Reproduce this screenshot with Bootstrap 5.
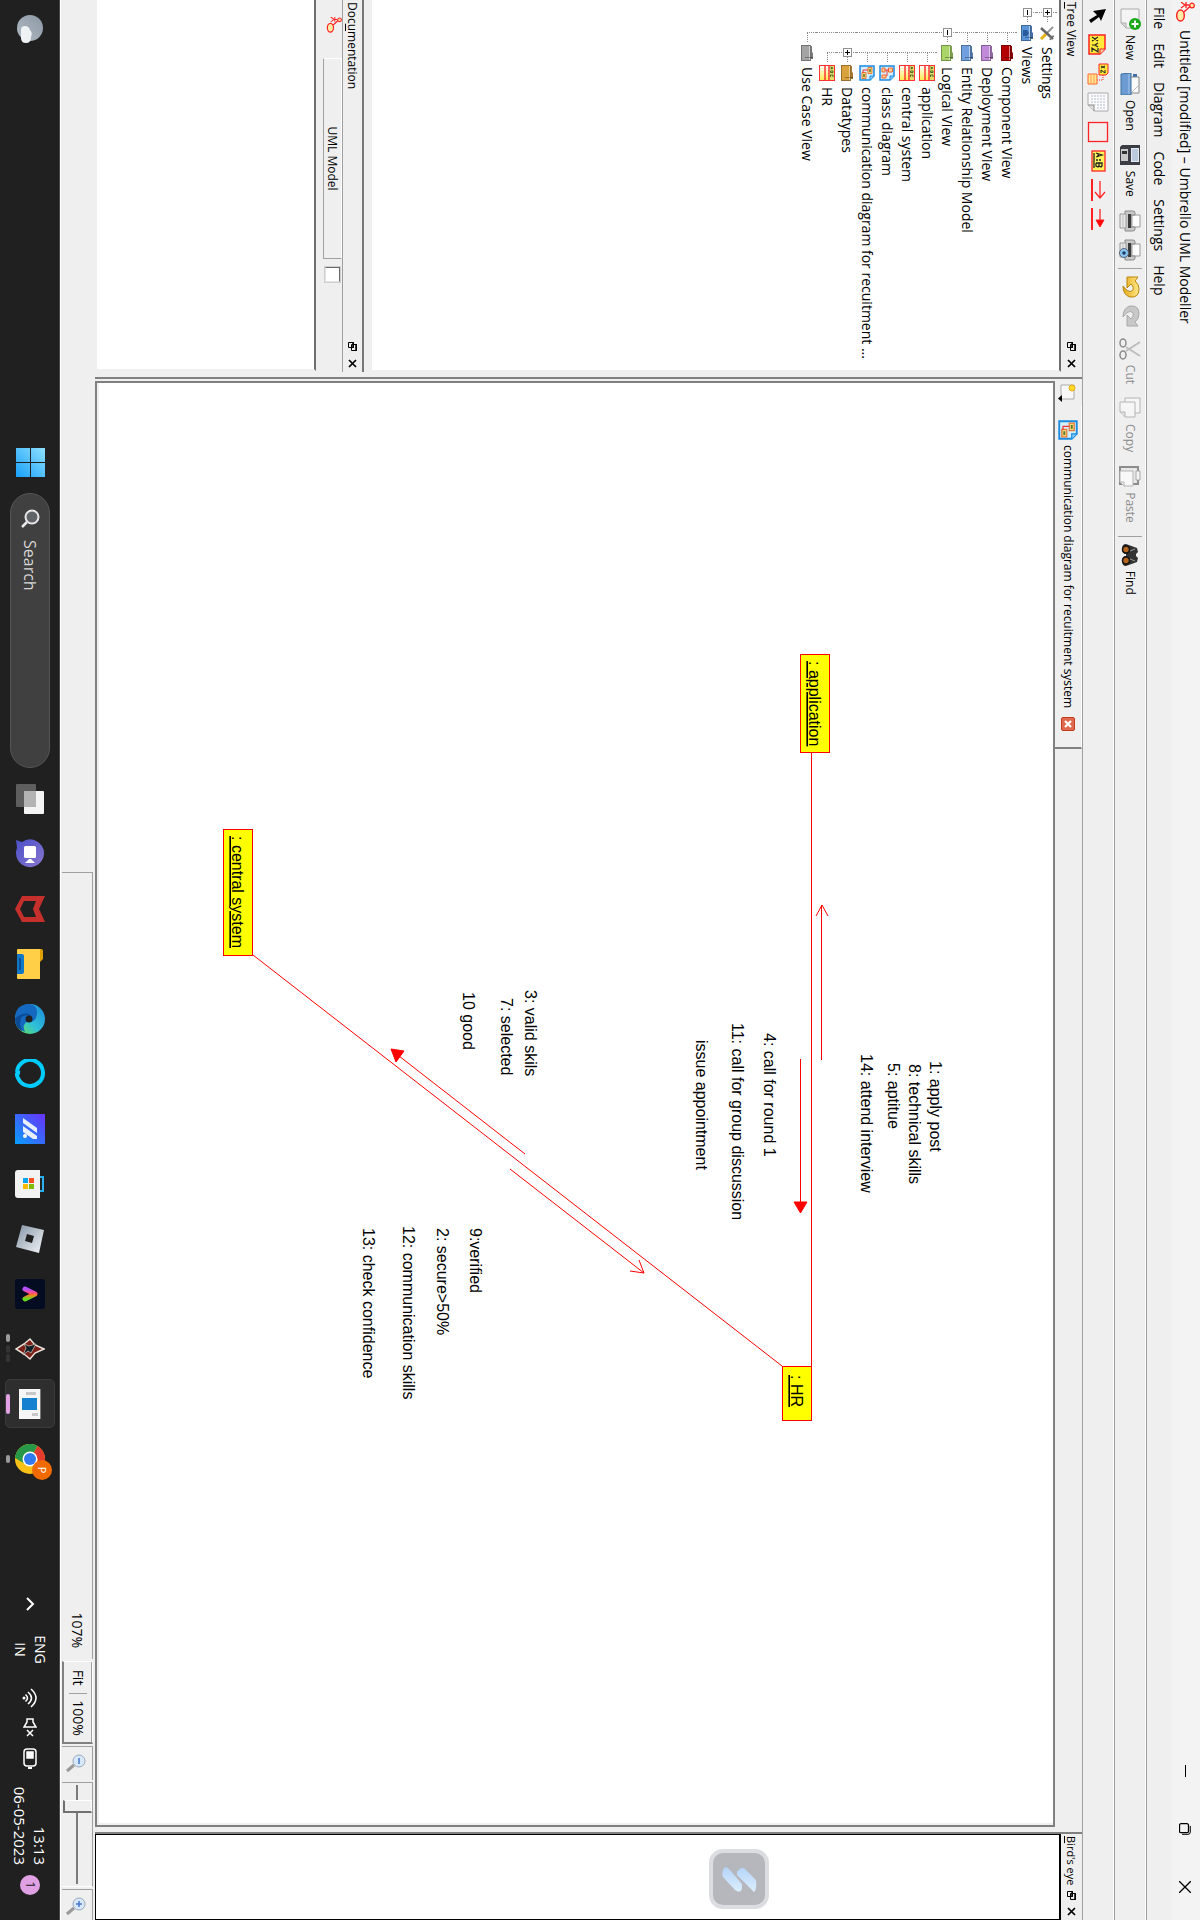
<!DOCTYPE html>
<html lang="en">
<head>
<meta charset="utf-8">
<meta name="viewport" content="width=device-width, initial-scale=1">
<title>Untitled [modified] – Umbrello UML Modeller</title>
<link href="https://cdn.jsdelivr.net/npm/bootstrap@5.3.0/dist/css/bootstrap.min.css" rel="stylesheet">
<style>
  html, body { height: 100%; overflow: hidden; background: #efefef; }
  .display { width: 100%; height: 100%; overflow: hidden; contain: strict; }
  /* The desktop is turned a quarter clockwise on a portrait display */
  .desktop {
    width: 100vh; height: 100vw; overflow: hidden;
    transform-origin: 0 0; transform: translateX(100vw) rotate(90deg);
    font: 14px/20px "Open Sans", "Noto Sans", sans-serif; color: #000; background: #efefef;
  }
  .desktop svg { display: block; flex: none; }
  .desktop .btn { border: 0; border-radius: 0; padding: 0; font-size: inherit; line-height: inherit; color: inherit; }
  .titlebar { height: 29px; background: #f3f3f3; padding-left: 2px; font-size: 14px; }
  .winctl { width: 58px; height: 29px; display: flex; align-items: center; justify-content: center; }
  .menubar { height: 25px; padding-left: 7px; gap: 14px; border-bottom: 1px solid #a0a0a0; font-size: 14px; }
  .menubar a { color: #000; text-decoration: none; }
  .toolrow { height: 32px; border-top: 1px solid #fff; border-bottom: 1px solid #a0a0a0; padding-left: 8px; gap: 7px; }
  .toolrow.toolmain { font-size: 12px; }
  .toolmain .btn { gap: 5px; display: flex; align-items: center; }
  .toolmain .btn.labelled { margin-right: 6px; }
  .toolmain .btn:disabled { opacity: 1; color: #8b8b8b; }
  .toolsep { width: 1px; height: 24px; background: #a0a0a0; }
  .docktitle { height: 21px; padding: 0 4px 0 2px; font-size: 12px; line-height: 20px; }
  .docktitle u { text-underline-offset: 2px; }
  .dockbtns { display: flex; gap: 8px; }
  .leftdock { width: 372px; flex: none; }
  .sunken { background: #fff; border: 2px solid; border-color: #888 #efefef #efefef #888; }
  .treebox { flex: 691 1 0; border-left-width: 0; border-top: 2px solid #6d6d6d; }
  .tree { list-style: none; margin: 0; padding: 2px 0 0 3px; }
  .tree li { height: 20px; display: flex; align-items: center; white-space: nowrap; }
  .tree li > svg { margin: 0 6px 0 2px; }
  .guide { width: 20px; height: 20px; flex: none; position: relative; }
  .guide.g-v::before, .guide.g-t::before, .guide.g-l::before { content: ""; position: absolute; left: 9px; top: 0; height: 20px; border-left: 1px dotted #8a8a8a; }
  .guide.g-l::before { height: 10px; }
  .guide.g-t::after, .guide.g-l::after { content: ""; position: absolute; left: 10px; top: 9px; width: 9px; border-top: 1px dotted #8a8a8a; }
  .guide .fold { position: absolute; z-index: 1; left: 5px; top: 5px; width: 9px; height: 9px; background: #fff; border: 1px solid #919191; padding: 0; }
  .fold::before { content: ""; position: absolute; left: 1px; top: 3px; width: 5px; height: 1px; background: #000; }
  .fold.plus::after { content: ""; position: absolute; left: 3px; top: 1px; width: 1px; height: 5px; background: #000; }
  .docdock { flex: 268 1 0; min-height: 0; margin-top: 6px; border-top: 2px solid #777; }
  .docdock .docktitle { height: 19px; }
  .dochead { height: 27px; border-top: 1px solid #a0a0a0; padding-left: 17px; font-size: 12px; }
  .dochead .btn { width: 201px; height: 19px; margin: 0 8px 0 25px; line-height: 17px; border: 1px solid; border-color: #fff #a0a0a0 #a0a0a0 #fff; }
  .dochead input { appearance: none; width: 15px; height: 15px; margin: 2px 0 0; background: #fff; border: 1px solid; border-color: #696969 #e3e3e3 #e3e3e3 #696969; box-shadow: 0 0 0 1px #cfcfcf; border-radius: 0; }
  .docdock textarea { resize: none; border-radius: 0; width: 371px; border-left: 0; border-top-color: #6d6d6d; display: block; }
  .workarea { margin-left: 5px; border-left: 2px solid #808080; padding-left: 2px; min-width: 0; }
  .tabstrip { height: 27px; padding-left: 2px; }
  .tabmenu { width: 23px; border-right: 1px solid #fff; }
  .doctab { display: flex; align-items: center; width: 343px; padding-left: 14px; gap: 5px; border-top: 1px solid #fff; border-right: 2px solid #808080; font-size: 12px; }
  .tabclose { width: 14px; height: 14px; border: 1px solid #c93a22 !important; border-radius: 2px !important; background: #dd6a50; }
  .canvasbox { border: 2px solid #808080; background: #fff; overflow: hidden; min-height: 0; box-shadow: inset -2px -2px 0 #efefef; }
  .diagram { width: 100%; height: 100%; font: 16px "Liberation Sans", Arial, sans-serif; }
  .rightdock { width: 88px; flex: none; margin-left: 5px; border-left: 2px solid #808080; }
  .rightdock .docktitle { font-size: 11px; }
  .rightdock .dockbtns { gap: 7px; }
  .birdseye { background: #fff; border: 1px solid #000; border-top-width: 2px; }
  .applogo { width: 60px; height: 60px; margin: 290px 0 0 14px; background: #b6b7bc; border: 4px solid #dcdde1; border-radius: 14px; }
  .statusbar { height: 35px; padding: 2px 0 1px; gap: 2px; border-bottom: 1px solid #fff; }
  .statpad { flex: 876 1 0; }
  .statmsg { flex: 781 1 0; padding-right: 11px; border-top: 1px solid #a0a0a0; border-left: 1px solid #a0a0a0; }
  .zoomset { width: 83px; border: 1px solid #fff; border-right: 2px solid #808080; border-bottom: 2px solid #808080; box-shadow: inset 0 1px 0 #a0a0a0; }
  .zoomset .btn { width: 31px; height: 18px; line-height: 18px; }
  .zoomset .btn + .btn { width: 49px; border-left: 1px solid #a0a0a0; }
  .statcell { border-top: 1px solid #a0a0a0; border-left: 1px solid #a0a0a0; border-right: 1px solid #fff; }
  .statcell.btn { border-top: 1px solid #a0a0a0 !important; border-left: 1px solid #a0a0a0 !important; }
  .zoomslide { appearance: none; width: 99px; height: 29px; margin: 0 2px; background: linear-gradient(#7b7b7b, #7b7b7b) 0 14px / 100% 2px no-repeat; display: block; }
  .zoomslide::-webkit-slider-thumb { appearance: none; width: 13px; height: 29px; background: #efefef; border: 1px solid #fff; border-right: 2px solid #707070; border-bottom: 2px solid #707070; }
  .taskbar { height: 60px; background: #202020; border-top: 1px solid #4a4a4a; padding-bottom: 1px; color: #fff; }
  .taskbar .btn { width: 55px; height: 58px; display: flex; align-items: center; justify-content: center; position: relative; flex: none; }
  .weather { width: 448px; padding-left: 14px; }
  .searchpill { width: 275px; height: 40px; margin: 0 3px 0 15px; padding-left: 15px; gap: 11px; background: #404040; border: 1px solid #555; border-radius: 20px; }
  .searchpill input { background: none; border: 0; outline: 0; width: 200px; font-size: 16px; color: #fff; padding: 0; }
  .searchpill input::placeholder { color: #d8d8d8; opacity: 1; }
  .runmark { position: absolute; bottom: 5px; left: 24px; width: 8px; height: 4px; border-radius: 2px; background: #9a9a9a; }
  .runmark.stack { left: 13px; box-shadow: 11px 0 0 #343434, 20px 0 0 #343434; }
  .runmark.front { left: 18px; width: 20px; background: #dfa0e4; }
  .taskbar .btn.current::before { content: ""; position: absolute; inset: 4px 3px; background: #2e2e2e; border: 1px solid #3b3b3b; border-radius: 5px; }
  .current svg, .current .runmark { z-index: 1; }
  .profile { position: absolute; top: 7px; left: 29px; width: 20px; height: 20px; border-radius: 50%; background: #f06a00; font-size: 11px; line-height: 20px; text-align: center; }
  .tray { gap: 18px; padding-right: 25px; }
  .trayicons { gap: 10px; }
  .lang { font-size: 14px; line-height: 20px; margin: 0 6px; }
  .clock { font-size: 15px; line-height: 20px; }
  .notecount { width: 20px; height: 20px; border-radius: 50%; background: #dfa0e4; color: #222; font-size: 12px; line-height: 20px; text-align: center; }
</style>
</head>
<body>
<svg width="0" height="0" class="position-absolute" aria-hidden="true">
  <defs>
    <linearGradient id="gold" x1="0" y1="0" x2="0" y2="1"><stop offset="0" stop-color="#ffe98a"/><stop offset="1" stop-color="#e4a818"/></linearGradient>
    <linearGradient id="cls" x1="0" y1="0" x2="1" y2="0"><stop offset="0" stop-color="#fff"/><stop offset="1" stop-color="#ffe94a"/></linearGradient>
    <linearGradient id="win" x1="0" y1="0" x2="1" y2="1"><stop offset="0" stop-color="#8fe0ff"/><stop offset="1" stop-color="#18a0f8"/></linearGradient>
    <linearGradient id="chat" x1="0" y1="1" x2="1" y2="0"><stop offset="0" stop-color="#4a50c8"/><stop offset="1" stop-color="#8a78d0"/></linearGradient>
    <linearGradient id="strm" x1="0" y1="0" x2="1" y2="1"><stop offset="0" stop-color="#08a0ff"/><stop offset="0" stop-color="#6a30f8"/><stop offset="1" stop-color="#08a0ff"/></linearGradient>
    <linearGradient id="rbx" x1="0" y1="1" x2="1" y2="0"><stop offset="0" stop-color="#8494a4"/><stop offset="1" stop-color="#f4f6f8"/></linearGradient>
    <linearGradient id="rain" x1="0" y1="0" x2="1" y2="0"><stop offset="0" stop-color="#b050ff"/><stop offset=".35" stop-color="#ff4a90"/><stop offset=".6" stop-color="#ff7a20"/><stop offset="1" stop-color="#60e020"/></linearGradient>
    <linearGradient id="edgeg" x1="0" y1="0" x2="1" y2="1"><stop offset="0" stop-color="#1a88d8"/><stop offset=".55" stop-color="#30c0d8"/><stop offset="1" stop-color="#70e840"/></linearGradient>
    <linearGradient id="moon" x1="0" y1="0" x2="1" y2="1"><stop offset="0" stop-color="#8c98a4"/><stop offset="1" stop-color="#b0bac4"/></linearGradient>
    <linearGradient id="strip" x1="0" y1="0" x2="1" y2="0"><stop offset="0" stop-color="#b4d4f8"/><stop offset="1" stop-color="#dceefe"/></linearGradient>
  </defs>
  <symbol id="i-folder" viewBox="0 0 16 16"><path d="M1 3h6l1-1h6v3H1z" fill="currentColor"/><path d="M1 3h6l1-1h6v3H1z" fill="#000" opacity=".25"/><path d="M0 4h16v10H0z" fill="currentColor"/><path d="M1 5.500h14" stroke="#fff" opacity=".5"/><path d="M.5 4.500h15v9H.5zM12.500 2v8" fill="none" stroke="#000" opacity=".3"/></symbol>
  <symbol id="i-class" viewBox="0 0 16 16"><rect x=".5" y=".5" width="15" height="15" fill="url(#cls)" stroke="#f33"/><rect x="1" y="1" width="14" height="4" fill="#e4dc6a"/><path d="M2 4.500 3 2l1 2.500M6 4.500V2h1.500v2.500zM12 2h-2v2.500h2" stroke="#4a6a28" fill="none"/><path d="M1 6h14M1 10h14" stroke="#f33" stroke-width="1.500"/></symbol>
  <symbol id="i-comm" viewBox="0 0 16 16"><path d="M1 1h10l4 4v10H1z" fill="#d4f0ff" stroke="#1a8ae0" stroke-width="1.500"/><path d="M11 1v4h4" fill="#8fd0fa" stroke="#1a8ae0"/><path d="M2.500 3h6v4h-6zM7.500 9h6v4h-6z" fill="#f3d87a" stroke="#e8783a"/><path d="M5 7v5h3" fill="none" stroke="#e33"/><path d="M4 5h3M9 11h3" stroke="#5a7a2a" stroke-width="1.500"/></symbol>
  <symbol id="i-clsdiag" viewBox="0 0 16 16"><path d="M1 1h10l4 4v10H1z" fill="#d4f0ff" stroke="#1a8ae0" stroke-width="1.500"/><path d="M11 1v4h4" fill="#8fd0fa" stroke="#1a8ae0"/><path d="M3 2.500h4v4H3zM10 9h3v4h-3zM3 10h4v3H3z" fill="#ffd0a0" stroke="#f0642a"/><path d="M5 6v4M5 8h6" fill="none" stroke="#e33"/></symbol>
  <symbol id="i-umb" viewBox="0 0 20 20"><path d="M4 4.500 10 11" stroke="#f22" stroke-width="1.500"/><circle cx="3.500" cy="3" r="2.300" fill="#ffe9a0" stroke="#f22" stroke-width="1.300"/><path d="M0 9h6M3 6v5M3 10l-3 4M3 10l3 4" stroke="#f22" stroke-width="1.300" fill="none"/><ellipse cx="13.500" cy="14.500" rx="5.500" ry="3.800" fill="#ffeca8" stroke="#f22" stroke-width="1.500"/></symbol>
  <symbol id="i-float" viewBox="0 0 9 9"><path d="M2.500.5h6v5h-6zM.5 3.500h5v5h-5z" fill="#efefef" stroke="#000"/><path d="M2 1h7M0 4h6" stroke="#000" stroke-width="1.500"/></symbol>
  <symbol id="i-x" viewBox="0 0 9 9"><path d="M1 1l7 7M8 1 1 8" stroke="#000" stroke-width="1.700"/></symbol>
  <symbol id="i-print" viewBox="0 0 22 22"><path d="M5 1h12v8H5z" fill="#fdfdfd" stroke="#999"/><path d="M1 8q0-2 2-2h2v4h12V6h2q2 0 2 2v8H1z" fill="#c9c9c9" stroke="#8a8a8a"/><path d="M4 10h14v3H4z" fill="#3a3a3a"/><path d="M4 15h14v6H4z" fill="#e9e9e9" stroke="#999"/><path d="M5 18h12" stroke="#bbb"/></symbol>
</svg>

<div class="display">
<div class="desktop d-flex flex-column">
  <header class="titlebar d-flex align-items-center">
    <svg width="20" height="20"><use href="#i-umb"/></svg>
    <span class="ms-2 me-auto">Untitled [modified] – Umbrello UML Modeller</span>
    <button class="btn winctl" aria-label="Minimize"><svg width="12" height="12"><path d="M0 5.500h12" stroke="#000"/></svg></button>
    <button class="btn winctl" aria-label="Restore"><svg width="12" height="12" fill="none" stroke="#000"><rect x=".7" y="2.500" width="9" height="9" rx="1.500" stroke-width="1.300"/><path d="M3 .7h6q2.300 0 2.300 2.300v6"/></svg></button>
    <button class="btn winctl me-1" aria-label="Close"><svg width="12" height="12"><path d="M0 0l12 12M12 0 0 12" stroke="#000" stroke-width="1.300"/></svg></button>
  </header>

  <nav class="menubar d-flex align-items-center" aria-label="Menu">
    <a href="#">File</a><a href="#">Edit</a><a href="#">Diagram</a><a href="#">Code</a><a href="#">Settings</a><a href="#">Help</a>
  </nav>

  <div class="toolrow toolmain d-flex align-items-center" role="toolbar" aria-label="Main toolbar">
    <button class="btn labelled"><svg width="22" height="22"><path d="M1 2h19v13l-5 5H1z" fill="#f4f4f4" stroke="#aaa"/><path d="M20 15h-5v5z" fill="#ddd" stroke="#aaa"/><circle cx="16" cy="6" r="6" fill="#18a818"/><path d="M16 2.500v7M12.500 6h7" stroke="#fff" stroke-width="2"/></svg>New</button>
    <button class="btn labelled"><svg width="22" height="22"><path d="M1 4h8v4H1z" fill="#3c6ca8"/><path d="M4 2h16v12H4z" fill="#fafafa" stroke="#888"/><path d="M12 2l8 8" stroke="#bbb"/><path d="M0 10h22v10H1z" fill="#6b9bd2" stroke="#41709f"/><path d="M1 12h20" stroke="#a9c8ea"/></svg>Open</button>
    <button class="btn labelled"><svg width="22" height="22"><path d="M1 1h20v20H3l-2-2z" fill="#3c3c44"/><path d="M4 2h14v8H4z" fill="#e6ecf4"/><path d="M5 4h12M5 6h12M5 8h12" stroke="#8fa6c4"/><path d="M5 13h12v7H5z" fill="#c9c9c9"/><path d="M7 14h3v5H7z" fill="#333"/></svg>Save</button>
    <button class="btn" aria-label="Print"><svg width="22" height="22"><use href="#i-print"/></svg></button>
    <button class="btn" aria-label="Print preview"><svg width="22" height="22"><use href="#i-print"/><circle cx="14" cy="17" r="4.500" fill="#8cc4f0" stroke="#567"/><circle cx="14" cy="17" r="1.800" fill="#1a3a6a"/></svg></button>
    <span class="toolsep"></span>
    <button class="btn" aria-label="Undo"><svg width="22" height="22"><path d="M1 3v11h11l-4-4q4-4 7-1 2 4-5 9 9 0 11-7 1-9-8-9-5 0-8 4z" fill="url(#gold)" stroke="#b8860b"/></svg></button>
    <button class="btn me-1" disabled aria-label="Redo"><svg width="22" height="22"><path d="M21 3v11H10l4-4q-4-4-7-1-2 4 5 9-9 0-11-7-1-9 8-9 5 0 8 4z" fill="#c8c8c8" stroke="#a8a8a8"/></svg></button>
    <button class="btn labelled" disabled><svg width="22" height="22"><path d="M4 1l9 14M18 1 9 15" stroke="#bdbdbd" stroke-width="2"/><ellipse cx="5" cy="18" rx="4" ry="3" fill="none" stroke="#8c8c8c" stroke-width="1.500"/><ellipse cx="17" cy="18" rx="4" ry="3" fill="none" stroke="#8c8c8c" stroke-width="1.500"/></svg>Cut</button>
    <button class="btn labelled" disabled><svg width="22" height="22"><path d="M1 1h15v15H1z" fill="#f6f6f6" stroke="#b4b4b4"/><path d="M5 6h15v10l-5 5H5z" fill="#f6f6f6" stroke="#b4b4b4"/><path d="M20 16h-5v5" fill="#e2e2e2" stroke="#b4b4b4"/></svg>Copy</button>
    <button class="btn labelled" disabled><svg width="22" height="22"><path d="M2 3h17v18H2z" fill="#e8e8e8" stroke="#8c8c8c" stroke-width="2"/><path d="M6 1h9v4H6z" fill="#f4f4f4" stroke="#a8a8a8"/><path d="M6 8h15v9l-4 4H6z" fill="#f8f8f8" stroke="#b4b4b4"/><path d="M21 17h-4v4" fill="none" stroke="#b4b4b4"/></svg>Paste</button>
    <span class="toolsep"></span>
    <button class="btn"><svg width="22" height="22"><path d="M4 4l4-1 2 2h2l2-2 4 1 4 11q0 4-5 4t-5-4h-2q0 4-5 4t-5-4z" fill="#333"/><circle cx="5.500" cy="15" r="3.500" fill="#b5651d" stroke="#111" stroke-width="1.500"/><circle cx="16.500" cy="15" r="3.500" fill="#b5651d" stroke="#111" stroke-width="1.500"/><path d="M5 6l2 5M17 6l-2 5" stroke="#999"/></svg>Find</button>
  </div>

  <div class="toolrow d-flex align-items-center" role="toolbar" aria-label="Diagram toolbar">
    <button class="btn" aria-label="Select"><svg width="19" height="22"><path d="M1 3l12 5-4 2 6 8-3 2-5-8-4 4z"/></svg></button>
    <button class="btn" aria-label="Note"><svg width="22" height="22"><path d="M1 4h14l5 5v11H1z" fill="#ffe93c" stroke="#f22" stroke-width="1.500"/><path d="M15 4v5h5" fill="#ffd0a0" stroke="#f22"/><path d="M3 11l4 6M7 11l-4 6M9 11l2 3 2-3M11 14v3M14 11h4l-4 6h4" fill="none" stroke="#222" stroke-width="1.200"/></svg></button>
    <button class="btn" aria-label="Anchor"><svg width="22" height="22"><path d="M1 1h9l2 2v7H1z" fill="#ffe93c" stroke="#f22"/><path d="M3 4l2 4M5 4 3 8M7 4h3L7 8h3" stroke="#222" fill="none"/><path d="M12 6h5v6" fill="none" stroke="#f22" stroke-dasharray="1 1"/><path d="M11 12h10v9H11z" fill="#ffe98a" stroke="#f63"/><path d="M11 15h10M11 18h10" stroke="#f96"/></svg></button>
    <button class="btn" aria-label="Text line"><svg width="22" height="22"><path d="M1 1h18v14l-6 6H1z" fill="#fbfbfd" stroke="#aaa"/><path d="M3 5h14M3 8h14M3 11h14M3 14h10M3 17h8" stroke="#b4bccc" stroke-dasharray="2 1"/><path d="M19 15h-6v6" fill="#ddd" stroke="#888"/></svg></button>
    <button class="btn" aria-label="Box"><svg width="22" height="22"><rect x="1.500" y="1.500" width="19" height="19" fill="#f2efef" stroke="#f22" stroke-width="1.300"/></svg></button>
    <button class="btn" aria-label="Object"><svg width="22" height="22"><rect x="1" y="4" width="20" height="13" fill="#fff35a" stroke="#f22" stroke-width="1.300"/><path d="M3 13l2-6 2 6M4 11h2M10 8v2M10 11v2M13 13V7h3l1 1-1 2h-3M16 10l1 1-1 2h-3M3 15h15" fill="none" stroke="#222" stroke-width="1.300"/></svg></button>
    <button class="btn" aria-label="Synchronous message"><svg width="22" height="22" stroke="#f22" fill="none"><path d="M0 17h22" stroke-width="2"/><path d="M2 9h16M13 4l6 5-6 5" stroke-width="1.300"/></svg></button>
    <button class="btn" aria-label="Asynchronous message"><svg width="22" height="22" stroke="#f22" fill="#f00"><path d="M0 17h22" stroke-width="2"/><path d="M1 9h11" stroke-width="1.300"/><path d="M12 5l7 4-7 4z"/></svg></button>
  </div>

  <main class="d-flex flex-grow-1 overflow-hidden">
    <aside class="leftdock d-flex flex-column">
      <div class="docktitle d-flex align-items-center"><span class="me-auto"><u>T</u>ree View</span>
        <span class="dockbtns"><button class="btn" aria-label="Float tree view"><svg width="9" height="9"><use href="#i-float"/></svg></button>
        <button class="btn" aria-label="Close tree view"><svg width="9" height="9"><use href="#i-x"/></svg></button></span></div>
      <div class="sunken treebox">
        <ul class="tree">
          <li><span class="guide g-t"><button class="fold plus" aria-label="Expand Settings"></button></span><svg width="16" height="16"><path d="M2 2l7 7" stroke="#999" stroke-width="2"/><path d="M9 9l5 5" stroke="#e8b010" stroke-width="3"/><path d="M14 2 3 14" stroke="#666" stroke-width="2.500"/><path d="M11 1l1 3 3 1" stroke="#777" fill="none" stroke-width="1.500"/></svg>Settings</li>
          <li><span class="guide g-l"><button class="fold" aria-label="Collapse Views"></button></span><svg width="16" height="16" color="#5b95d8"><use href="#i-folder"/><path d="M5 12V8l3-2 3 2v4z" fill="#2a5c9c"/></svg>Views</li>
          <li><span class="guide"></span><span class="guide g-t"></span><svg width="16" height="16" color="#b40000"><use href="#i-folder"/></svg>Component View</li>
          <li><span class="guide"></span><span class="guide g-t"></span><svg width="16" height="16" color="#c08ad8"><use href="#i-folder"/></svg>Deployment View</li>
          <li><span class="guide"></span><span class="guide g-t"></span><svg width="16" height="16" color="#6f9fdc"><use href="#i-folder"/></svg>Entity Relationship Model</li>
          <li><span class="guide"></span><span class="guide g-t"><button class="fold" aria-label="Collapse Logical View"></button></span><svg width="16" height="16" color="#a8d468"><use href="#i-folder"/></svg>Logical View</li>
          <li><span class="guide"></span><span class="guide g-v"></span><span class="guide g-t"></span><svg width="16" height="16"><use href="#i-class"/></svg>application</li>
          <li><span class="guide"></span><span class="guide g-v"></span><span class="guide g-t"></span><svg width="16" height="16"><use href="#i-class"/></svg>central system</li>
          <li><span class="guide"></span><span class="guide g-v"></span><span class="guide g-t"></span><svg width="16" height="16"><use href="#i-clsdiag"/></svg>class diagram</li>
          <li><span class="guide"></span><span class="guide g-v"></span><span class="guide g-t"></span><svg width="16" height="16"><use href="#i-comm"/></svg>communication diagram for recuitment ...</li>
          <li><span class="guide"></span><span class="guide g-v"></span><span class="guide g-t"><button class="fold plus" aria-label="Expand Datatypes"></button></span><svg width="16" height="16" color="#d9a23c"><use href="#i-folder"/></svg>Datatypes</li>
          <li><span class="guide"></span><span class="guide g-v"></span><span class="guide g-l"></span><svg width="16" height="16"><use href="#i-class"/></svg>HR</li>
          <li><span class="guide"></span><span class="guide g-l"></span><svg width="16" height="16" color="#a4a4a4"><use href="#i-folder"/></svg>Use Case View</li>
        </ul>
      </div>
      <section class="docdock d-flex flex-column">
        <div class="docktitle d-flex align-items-center"><span class="me-auto">Doc<u>u</u>mentation</span>
          <span class="dockbtns"><button class="btn" aria-label="Float documentation"><svg width="9" height="9"><use href="#i-float"/></svg></button>
          <button class="btn" aria-label="Close documentation"><svg width="9" height="9"><use href="#i-x"/></svg></button></span></div>
        <div class="dochead d-flex align-items-start">
          <svg width="16" height="16"><use href="#i-umb"/></svg>
          <button class="btn">UML Model</button>
          <input type="checkbox" aria-label="Documentation modified">
        </div>
        <textarea class="sunken flex-grow-1" aria-label="Documentation"></textarea>
      </section>
    </aside>

    <section class="workarea flex-grow-1 d-flex flex-column">
      <div class="tabstrip d-flex">
        <button class="btn tabmenu" aria-label="New diagram"><svg width="22" height="22"><path d="M2 5h14v13H2z" fill="#f8f8f8" stroke="#aaa"/><circle cx="5" cy="7" r="3" fill="#ffd92a" stroke="#e8b010"/><path d="M12 17h7l-3.500 4z"/></svg></button>
        <div class="doctab"><svg width="20" height="20"><use href="#i-comm"/></svg><span class="flex-grow-1 text-nowrap">communication diagram for recuitment system</span>
          <button class="btn tabclose me-3" aria-label="Close tab"><svg width="12" height="12"><path d="M3 3l6 6M9 3 3 9" stroke="#fff" stroke-width="2.200"/></svg></button></div>
      </div>
      <div class="canvasbox flex-grow-1">
        <svg class="diagram" role="img" aria-label="Communication diagram">
          <g transform="translate(-383 -147)">
            <g stroke="#f00" fill="none">
              <path d="M752 388.500h614M955 947l411-529"/>
              <path d="M1060 378.500H905M916 372l-11 6 11 6M1059 399.500h144M1154 675l-98 126M1169 690l104-134M1260 561l13-5-2 14"/>
              <path d="M1213 399.500l-11-6.500v13zM1049 809l2-13 11 8z" fill="#f00"/>
              <g fill="#ff0"><rect x="654.500" y="370.500" width="98" height="29"/><rect x="829.500" y="947.500" width="126" height="29"/><rect x="1366.500" y="388.500" width="54" height="29"/></g>
            </g>
            <g text-decoration="underline">
              <text x="661" y="391">: application</text><text x="836" y="968">: central system</text><text x="1375" y="409">: HR</text>
            </g>
            <text x="1061" y="270">1: apply post</text>
            <text x="1064" y="291">8: technical skills</text>
            <text x="1063" y="312">5: aptitue</text>
            <text x="1054" y="339">14: attend interview</text>
            <text x="1033" y="436">4: call for round 1</text>
            <text x="1023" y="468">11: call for group discussion</text>
            <text x="1040" y="504">issue appointment</text>
            <text x="990" y="675">3: valid skils</text>
            <text x="998" y="699">7: selected</text>
            <text x="992" y="737">10 good</text>
            <text x="1228" y="730">9:verified</text>
            <text x="1228" y="763">2: secure&gt;50%</text>
            <text x="1226" y="797">12: communication skills</text>
            <text x="1228" y="837">13: check confidence</text>
          </g>
        </svg>
      </div>
    </section>

    <aside class="rightdock d-flex flex-column">
      <div class="docktitle d-flex align-items-center"><span class="me-auto text-nowrap"><u>B</u>ird's eye</span>
        <span class="dockbtns"><button class="btn" aria-label="Float bird's eye view"><svg width="9" height="9"><use href="#i-float"/></svg></button>
        <button class="btn" aria-label="Close bird's eye view"><svg width="9" height="9"><use href="#i-x"/></svg></button></span></div>
      <div class="birdseye flex-grow-1">
        <div class="applogo"><svg width="52" height="52"><path d="M14 40q5 4 10 2l13-12q4-5-1-7H31L15 37zM19 28q-6-4-3-8L27 9q10-1 12 2L22 28z" fill="url(#strip)"/></svg></div>
      </div>
    </aside>
  </main>

  <footer class="statusbar d-flex">
    <div class="statpad"></div>
    <div class="statmsg d-flex align-items-center justify-content-end">107%</div>
    <div class="zoomset d-flex align-items-center"><button class="btn">Fit</button><button class="btn">100%</button></div>
    <button class="btn statcell" aria-label="Zoom out"><svg width="33" height="28"><path d="M18 17l6 7" stroke="#999" stroke-width="3"/><circle cx="14" cy="12" r="6" fill="#d8e8fa" stroke="#9ab"/><path d="M11 12h6" stroke="#47c" stroke-width="1.500"/></svg></button>
    <div class="statcell"><input class="zoomslide" type="range" min="0" max="100" value="18" aria-label="Zoom"></div>
    <button class="btn statcell" aria-label="Zoom in"><svg width="30" height="28"><path d="M18 17l6 7" stroke="#999" stroke-width="3"/><circle cx="14" cy="12" r="6" fill="#d8e8fa" stroke="#9ab"/><path d="M11 12h6M14 9v6" stroke="#47c" stroke-width="1.500"/></svg></button>
  </footer>

  <nav class="taskbar d-flex align-items-center" aria-label="Taskbar">
    <div class="weather"><svg width="32" height="28"><circle cx="14" cy="14" r="13" fill="url(#moon)"/><path d="M16 23q-4 0-4-4t4-5q3-3 7-1 6 0 6 5t-5 5z" fill="#eef2f5"/></svg></div>
    <svg width="30" height="30" role="img" aria-label="Start"><path d="M0 0h14v14H0zM15 0h14v14H15zM0 15h14v14H0zM15 15h14v14H15z" fill="url(#win)"/></svg>
    <div class="searchpill d-flex align-items-center"><svg width="20" height="20" fill="none" stroke="#e8e8e8" stroke-width="2"><circle cx="8" cy="8" r="6.500" fill="#606468"/><path d="M13 13l5 5" stroke-width="2.500"/></svg><input type="text" placeholder="Search" aria-label="Search"></div>
    <button class="btn" aria-label="Task view"><svg width="30" height="30"><rect x="0" y="9" width="23" height="20" rx="1" fill="#5e5e5e"/><rect x="7" y="1" width="23" height="20" rx="1" fill="#f4f4f4"/><path d="M7 9h16v12H7z" fill="#b4b4b4"/></svg></button>
    <button class="btn" aria-label="Chat"><svg width="30" height="30"><path d="M15 1a14 14 0 1 1-6 27l-8 1 2-6A14 14 0 0 1 15 1z" fill="url(#chat)"/><rect x="7" y="9" width="12" height="12" rx="1.500" fill="#fff"/><path d="M20 14l4-4v10l-4-4z" fill="#fff"/></svg></button>
    <button class="btn" aria-label="Security"><svg width="30" height="30"><path d="M2 0l13 6 13-6v23l-13 7-13-7zM7 9v12l8 4 8-4V9l-8 3z" fill="#c52f2c" fill-rule="evenodd"/></svg></button>
    <button class="btn" aria-label="File explorer"><svg width="30" height="30"><path d="M0 4q0-2 2-2h8l3 3H0z" fill="#e0a000"/><path d="M0 5h30v22q0 1-1 1H1q-1 0-1-1z" fill="#ffcf48"/><path d="M5 28v-5q0-2 2-2h16q2 0 2 2v5z" fill="#0f78c8"/><path d="M9 25h12" stroke="#0a4f94" stroke-width="2"/></svg></button>
    <button class="btn" aria-label="Edge"><svg width="30" height="30"><circle cx="15" cy="15" r="15" fill="url(#edgeg)"/><path d="M0 15Q2 7 10 8q8 1 8 8-1 3 3 5 3 1 7-1-4 10-13 10Q0 30 0 15z" fill="#1468c0"/><path d="M10 22q-2-6 3-9-6 12 8 12l6-2q-4 7-12 7-4-3-5-8z" fill="#0c4a94"/><circle cx="15" cy="16" r="3.500" fill="#202020"/></svg></button>
    <button class="btn" aria-label="Alexa"><svg width="30" height="30"><path d="M13 28A13 13 0 1 1 19 27Q13 30 14 25" fill="none" stroke="#0cf" stroke-width="4"/></svg></button>
    <button class="btn" aria-label="Studio"><svg width="30" height="30"><rect width="30" height="30" fill="url(#strm)"/><path d="M4 22 14 8h5L9 22zM12 22 22 8h3v4l-7 10z" fill="#e8f0ff"/><circle cx="22" cy="20" r="2" fill="#fff"/></svg></button>
    <button class="btn" aria-label="Store"><svg width="30" height="30"><path d="M8 6V2h14v4" fill="none" stroke="#2ab0f0" stroke-width="2"/><path d="M1 5h28v22q0 3-3 3H4q-3 0-3-3z" fill="#f2f2f2"/><path d="M9 11h5v5H9z" fill="#f4511e"/><path d="M15 11h5v5h-5z" fill="#7fba00"/><path d="M9 17h5v5H9z" fill="#00a4ef"/><path d="M15 17h5v5h-5z" fill="#ffb900"/></svg></button>
    <button class="btn" aria-label="Roblox"><svg width="30" height="30"><path d="M6 1l23 5-6 23-22-6zM12 11l-2 7 7 2 2-7z" fill="url(#rbx)" fill-rule="evenodd"/></svg></button>
    <button class="btn" aria-label="Video editor"><svg width="30" height="30"><rect width="30" height="30" rx="3" fill="#040c22"/><path d="M10 20l5-10 5 10" fill="none" stroke="url(#rain)" stroke-width="5" stroke-linecap="round" stroke-linejoin="round"/></svg></button>
    <button class="btn" aria-label="StarUML"><svg width="30" height="30"><path d="M15 1l4 9 6 5-5 6-5 8-5-8-5-6 6-5z" fill="#7a2018" stroke="#e8e0d8" stroke-width="1.500"/><path d="M10 9l9 5-2 3 4 5-7-3-4 2 2-5z" fill="#102028" stroke="#d8d0c0" stroke-width=".7"/></svg><span class="runmark stack"></span></button>
    <button class="btn current" aria-label="Umbrello"><svg width="30" height="30"><rect y="4" width="30" height="22" fill="#f6f6f6"/><path d="M9 8h12v15H9z" fill="#1680d0"/><path d="M3 10h3M3 12h3M3 14h3M3 16h3M3 18h3M24 8h3M24 10h3M24 12h3" stroke="#999"/><path d="M0 4.500h30" stroke="#777"/></svg><span class="runmark front"></span></button>
    <button class="btn" aria-label="Chrome"><svg width="30" height="30"><circle cx="15" cy="15" r="15" fill="#fbc116"/><path d="M15 15 2 7.500A15 15 0 0 1 28 7.500H15z" fill="#e33b2e"/><path d="M2 7.500A15 15 0 0 0 14 30l7-12-6-3z" fill="#279847"/><circle cx="15" cy="15" r="7.500" fill="#fff"/><circle cx="15" cy="15" r="6" fill="#3079ee"/></svg><span class="profile">P</span><span class="runmark"></span></button>
    <div class="tray ms-auto d-flex align-items-center">
      <svg width="14" height="10" role="img" aria-label="Show hidden icons"><path d="M1 8l6-6 6 6" fill="none" stroke="#fff" stroke-width="2"/></svg>
      <div class="lang text-center">ENG<br>IN</div>
      <div class="trayicons d-flex align-items-center">
        <svg width="20" height="16" fill="none" stroke="#fff" stroke-width="1.600"><path d="M1 7q9-10 18 0M4 10q6-7 12 0M6.500 12.500q3.500-4 7 0"/><circle cx="10" cy="14" r="1.500" fill="#fff" stroke="none"/></svg>
        <svg width="20" height="14" fill="none" stroke="#fff" stroke-width="1.500"><path d="M1 4h3l5-3v12l-5-3H1zM12 4l6 6M18 4l-6 6"/></svg>
        <svg width="21" height="14" fill="none" stroke="#fff" stroke-width="1.500"><rect x="1" y="1" width="17" height="12" rx="3"/><path d="M4 4h6v6H4z" fill="#fff"/><path d="M20 5v4" stroke-width="2"/></svg>
      </div>
      <div class="trayicons d-flex align-items-center">
        <div class="clock text-end">13:13<br>06-05-2023</div>
        <span class="notecount">1</span>
      </div>
    </div>
  </nav>
</div>
</div>
<script src="https://cdn.jsdelivr.net/npm/bootstrap@5.3.0/dist/js/bootstrap.bundle.min.js"></script>
</body>
</html>
